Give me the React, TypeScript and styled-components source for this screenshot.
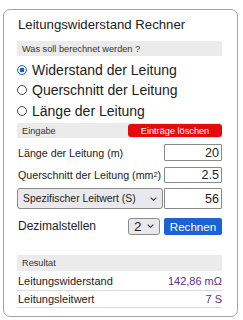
import React, {useState} from "react";
import styled, {createGlobalStyle} from "styled-components";

const GlobalStyle = createGlobalStyle`
  body {
    margin: 0;
    background: #ffffff;
    font-family: "Liberation Sans", Arial, sans-serif;
    color: #222222;
  }
`

const Card = styled.div`
  box-sizing: border-box;
  width: 235px;
  margin: 9px 0 0 3px;
  padding: 7px 15px 8px 13px;
  border: 1px solid #a3a3a3;
  border-radius: 7px;
  display: flex;
  flex-direction: column;
`

const Title = styled.div`
  height: 16px;
  line-height: 16px;
  padding-left: 1px;
  font-size: 13.2px;
  color: #222;
  margin-bottom: 8px;
`

const SectionBar = styled.div<{ $height: number, $top?: number }>`
  height: ${p => p.$height}px;
  margin-top: ${p => p.$top || 0}px;
  background: #ebebeb;
  display: flex;
  align-items: center;
  justify-content: space-between;
  padding-left: 5px;
  font-size: 9.2px;
  color: #333;
`

const RadioGroup = styled.div`
  display: flex;
  flex-direction: column;
  margin: 3.5px 0 2px 0;
`

const RadioRow = styled.label`
  height: 20.5px;
  display: flex;
  align-items: center;
  gap: 5px;
  font-size: 14px;
  color: #222;
  cursor: pointer;
`

const RadioInput = styled.input`
  appearance: none;
  margin: 0 0 0 0;
  width: 10px;
  height: 10px;
  border-radius: 50%;
  border: 1px solid #4a4a4a;
  box-sizing: border-box;
  background: #fff;

  &:checked {
    border: 1.5px solid #1a5fd2;
    background: radial-gradient(circle, #1a5fd2 0 2.3px, #fff 2.6px);
  }
`

const ClearButton = styled.button`
  width: 94px;
  height: 13px;
  padding: 0;
  border: none;
  border-radius: 3px;
  background: #e80a0a;
  color: #ffffff;
  font-family: inherit;
  font-size: 9.2px;
  cursor: pointer;
`

const InputRow = styled.div<{ $height: number, $top: number }>`
  height: ${p => p.$height}px;
  margin-top: ${p => p.$top}px;
  display: flex;
  align-items: stretch;
  gap: 1px;
`

const Label = styled.div`
  flex: 1;
  display: flex;
  align-items: center;
  padding-left: 1px;
  font-size: 10.7px;
  color: #222;

  sup {
    font-size: 7.5px;
    line-height: 0;
  }
`

const NumberInput = styled.input`
  box-sizing: border-box;
  width: 58px;
  height: 100%;
  margin: 0;
  padding: 0 2px 0 0;
  border: 1px solid #8a8a8a;
  border-radius: 1px;
  text-align: right;
  font-family: inherit;
  font-size: 12.5px;
  color: #222;
  background: #fff;
`

const SelectWrap = styled.div<{ $width?: number }>`
  position: relative;
  flex: ${p => p.$width ? "none" : "1"};
  width: ${p => p.$width ? p.$width + "px" : "auto"};
  display: flex;
`

const Select = styled.select<{ $size: number }>`
  appearance: none;
  box-sizing: border-box;
  width: 100%;
  margin: 0;
  padding: 0 0 0 5px;
  border: 1px solid #8a8a8a;
  border-radius: 3px;
  background: #e9e9ed;
  font-family: inherit;
  font-size: ${p => p.$size}px;
  color: #222;
`

const Chevron = styled.svg`
  position: absolute;
  right: 6px;
  top: 50%;
  margin-top: -2px;
  pointer-events: none;
`

const DecimalRow = styled.div`
  height: 20px;
  margin-top: 7px;
  display: flex;
  align-items: center;
`

const DecimalLabel = styled.div`
  flex: 1;
  padding-left: 1px;
  font-size: 12px;
  color: #222;
`

const CalcButton = styled.button`
  width: 58px;
  height: 17px;
  margin-left: 4px;
  padding: 0;
  border: none;
  border-radius: 2px;
  background: #1b62d6;
  color: #ffffff;
  font-family: inherit;
  font-size: 11.6px;
  cursor: pointer;
`

const ResultRow = styled.div<{ $height: number }>`
  height: ${p => p.$height}px;
  border-bottom: 1px solid #dcdcdc;
  display: flex;
  align-items: center;
  justify-content: space-between;
  padding-left: 1px;
  font-size: 11px;
  color: #222;
`

const ResultValue = styled.span`
  color: #5e2d8e;
`

const ChevronIcon = () => <Chevron width="7" height="4" viewBox="0 0 7 4">
    <path d="M0.7 0.6 L3.5 3.3 L6.3 0.6" fill="none" stroke="#333" strokeWidth="1.1"/>
</Chevron>

const format = (value: number, dec: number) => String(parseFloat(value.toFixed(dec))).replace(".", ",")

export default function App() {
    const [mode, setMode] = useState("widerstand")
    const [length, setLength] = useState("20")
    const [section, setSection] = useState("2.5")
    const [conductivity, setConductivity] = useState("56")
    const [decimals, setDecimals] = useState("2")
    const [result, setResult] = useState({r: "142,86 mΩ", g: "7 S"})

    const calculate = () => {
        const r = parseFloat(length) / (parseFloat(conductivity) * parseFloat(section))
        const dec = parseInt(decimals)
        if (!isFinite(r) || r <= 0) return
        setResult({r: format(r * 1000, dec) + " mΩ", g: format(1 / r, dec) + " S"})
    }

    const clear = () => {
        setLength("")
        setSection("")
        setConductivity("")
    }

    const modes = [
        {id: "widerstand", text: "Widerstand der Leitung"},
        {id: "querschnitt", text: "Querschnitt der Leitung"},
        {id: "laenge", text: "Länge der Leitung"},
    ]

    return <>
        <GlobalStyle/>
        <Card>
            <Title>Leitungswiderstand Rechner</Title>
            <SectionBar $height={15}>Was soll berechnet werden ?</SectionBar>
            <RadioGroup>
                {modes.map(m => <RadioRow key={m.id}>
                    <RadioInput type="radio" name="mode" checked={mode === m.id} onChange={() => setMode(m.id)}/>
                    {m.text}
                </RadioRow>)}
            </RadioGroup>
            <SectionBar $height={15}>
                Eingabe
                <ClearButton onClick={clear}>Einträge löschen</ClearButton>
            </SectionBar>
            <InputRow $height={17} $top={6}>
                <Label>Länge der Leitung (m)</Label>
                <NumberInput value={length} onChange={e => setLength(e.target.value)}/>
            </InputRow>
            <InputRow $height={16} $top={6}>
                <Label>Querschnitt der Leitung (mm<sup>2</sup>)</Label>
                <NumberInput value={section} onChange={e => setSection(e.target.value)}/>
            </InputRow>
            <InputRow $height={21} $top={5}>
                <SelectWrap>
                    <Select $size={10.4} defaultValue="s">
                        <option value="s">Spezifischer Leitwert (S)</option>
                        <option value="r">Spezifischer Widerstand (ρ)</option>
                    </Select>
                    <ChevronIcon/>
                </SelectWrap>
                <NumberInput value={conductivity} onChange={e => setConductivity(e.target.value)}/>
            </InputRow>
            <DecimalRow>
                <DecimalLabel>Dezimalstellen</DecimalLabel>
                <SelectWrap $width={32}>
                    <Select $size={13.5} value={decimals} onChange={e => setDecimals(e.target.value)}>
                        {["0", "1", "2", "3", "4"].map(d => <option key={d} value={d}>{d}</option>)}
                    </Select>
                    <ChevronIcon/>
                </SelectWrap>
                <CalcButton onClick={calculate}>Rechnen</CalcButton>
            </DecimalRow>
            <SectionBar $height={16} $top={19}>Resultat</SectionBar>
            <ResultRow $height={19}>
                Leitungswiderstand
                <ResultValue>{result.r}</ResultValue>
            </ResultRow>
            <ResultRow $height={16}>
                Leitungsleitwert
                <ResultValue>{result.g}</ResultValue>
            </ResultRow>
        </Card>
    </>
}
